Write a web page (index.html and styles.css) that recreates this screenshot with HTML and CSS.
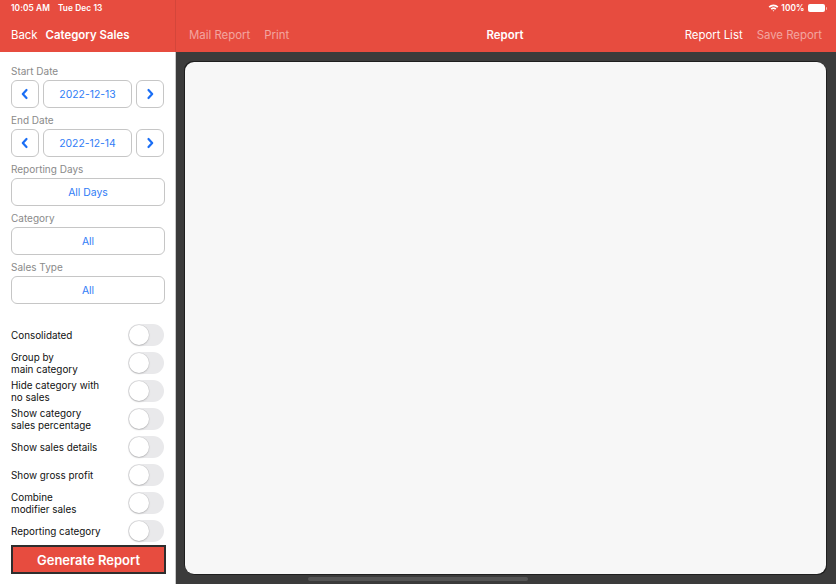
FILE: index.html
```html
<!DOCTYPE html>
<html>
<head>
<meta charset="utf-8">
<link rel="stylesheet" href="styles.css">
</head>
<body>
<div class="app">
  <aside class="sidebar">
    <header class="bar side-bar">
      <div class="status"><span>10:05 AM</span><span class="date">Tue Dec 13</span></div>
      <nav class="nav">
        <span class="nav-item">Back</span>
        <span class="nav-item bold">Category Sales</span>
      </nav>
    </header>
    <div class="side-body">
      <div class="field">
        <div class="label">Start Date</div>
        <div class="date-row">
          <button class="btn chev"><svg width="10" height="12" viewBox="0 0 10 12"><path d="M6.5 2 L2.8 6 L6.5 10" fill="none" stroke="#1a6ef5" stroke-width="2.2" stroke-linecap="round" stroke-linejoin="round"/></svg></button>
          <button class="btn value">2022-12-13</button>
          <button class="btn chev"><svg width="10" height="12" viewBox="0 0 10 12"><path d="M3.5 2 L7.2 6 L3.5 10" fill="none" stroke="#1a6ef5" stroke-width="2.2" stroke-linecap="round" stroke-linejoin="round"/></svg></button>
        </div>
      </div>
      <div class="field">
        <div class="label">End Date</div>
        <div class="date-row">
          <button class="btn chev"><svg width="10" height="12" viewBox="0 0 10 12"><path d="M6.5 2 L2.8 6 L6.5 10" fill="none" stroke="#1a6ef5" stroke-width="2.2" stroke-linecap="round" stroke-linejoin="round"/></svg></button>
          <button class="btn value">2022-12-14</button>
          <button class="btn chev"><svg width="10" height="12" viewBox="0 0 10 12"><path d="M3.5 2 L7.2 6 L3.5 10" fill="none" stroke="#1a6ef5" stroke-width="2.2" stroke-linecap="round" stroke-linejoin="round"/></svg></button>
        </div>
      </div>
      <div class="field">
        <div class="label">Reporting Days</div>
        <button class="btn full">All Days</button>
      </div>
      <div class="field">
        <div class="label">Category</div>
        <button class="btn full">All</button>
      </div>
      <div class="field">
        <div class="label">Sales Type</div>
        <button class="btn full">All</button>
      </div>

      <div class="toggles">
        <div class="toggle-row"><span>Consolidated</span><span class="switch"></span></div>
        <div class="toggle-row"><span>Group by<br>main category</span><span class="switch"></span></div>
        <div class="toggle-row"><span>Hide category with<br>no sales</span><span class="switch"></span></div>
        <div class="toggle-row"><span>Show category<br>sales percentage</span><span class="switch"></span></div>
        <div class="toggle-row"><span>Show sales details</span><span class="switch"></span></div>
        <div class="toggle-row"><span>Show gross profit</span><span class="switch"></span></div>
        <div class="toggle-row"><span>Combine<br>modifier sales</span><span class="switch"></span></div>
        <div class="toggle-row"><span>Reporting category</span><span class="switch"></span></div>
      </div>
      <button class="generate">Generate Report</button>
    </div>
  </aside>
  <main class="main">
    <header class="bar main-bar">
      <div class="status status-right">
        <svg width="11" height="8" viewBox="0 0 11 8"><path d="M0.6 2.6 A7 7 0 0 1 10.4 2.6 L9.2 3.8 A5.3 5.3 0 0 0 1.8 3.8 Z" fill="#fff"/><path d="M2.6 4.6 A4.3 4.3 0 0 1 8.4 4.6 L7.2 5.8 A2.6 2.6 0 0 0 3.8 5.8 Z" fill="#fff"/><path d="M4.6 6.6 A1.5 1.5 0 0 1 6.4 6.6 L5.5 7.6 Z" fill="#fff"/></svg>
        <span>100%</span>
        <span class="battery"><span class="battery-fill"></span></span>
        <span class="battery-tip"></span>
      </div>
      <nav class="nav main-nav">
        <div class="nav-left">
          <span class="nav-item faded">Mail Report</span>
          <span class="nav-item faded">Print</span>
        </div>
        <span class="nav-item bold title">Report</span>
        <div class="nav-right">
          <span class="nav-item">Report List</span>
          <span class="nav-item faded">Save Report</span>
        </div>
      </nav>
    </header>
    <div class="canvas">
      <div class="paper"></div>
      <div class="home-indicator"></div>
    </div>
  </main>
</div>
</body>
</html>
```
FILE: styles.css
```css
* { box-sizing: border-box; }
html, body {
  margin: 0;
  padding: 0;
  width: 836px;
  height: 584px;
  overflow: hidden;
  font-family: Inter, "Liberation Sans", sans-serif;
}
.app {
  display: flex;
  width: 836px;
  height: 584px;
}
.sidebar {
  width: 176px;
  display: flex;
  flex-direction: column;
  background: #fff;
  border-right: 1px solid #c8c8c8;
}
.bar {
  height: 52px;
  background: #e74c3f;
  color: #fff;
  position: relative;
}
.side-bar {
  border-right: 1px solid #d4463a;
  margin-right: -1px;
}
.status {
  height: 16px;
  display: flex;
  align-items: center;
  padding-left: 11px;
  font-size: 8.3px;
  font-weight: 600;
  letter-spacing: 0.1px;
}
.status .date { margin-left: 8px; }
.status-right {
  justify-content: flex-end;
  padding-right: 9px;
  gap: 2px;
}
.battery {
  width: 17px;
  height: 8px;
  border-radius: 2px;
  background: #fff;
  margin-left: 1px;
  display: inline-block;
}
.battery-tip {
  width: 1.5px;
  height: 3px;
  background: rgba(255,255,255,0.6);
  border-radius: 0 1px 1px 0;
  margin-left: -1px;
}
.nav {
  height: 36px;
  display: flex;
  align-items: center;
  padding-left: 11px;
  padding-top: 1px;
  font-size: 11.4px;
  gap: 8px;
}
.nav-item { white-space: nowrap; }
.bold { font-weight: 600; }
.faded { color: rgba(255,255,255,0.5); }
.main-nav {
  position: relative;
  justify-content: space-between;
  padding-left: 13px;
  padding-right: 14px;
}
.nav-left, .nav-right { display: flex; gap: 14px; }
.title {
  position: absolute;
  left: 329px;
  transform: translateX(-50%);
}
.side-body {
  flex: 1;
  padding: 13px 11px 0 11px;
  display: flex;
  flex-direction: column;
}
.label {
  font-size: 10px;
  color: #8a8a8a;
  height: 15px;
  line-height: 13px;
}
.btn {
  font-family: inherit;
  background: #fff;
  border: 1px solid #c6c6c6;
  border-radius: 6px;
  height: 28px;
  color: #2f7cf6;
  font-size: 10.4px;
  padding: 0;
  display: flex;
  align-items: center;
  justify-content: center;
}
.date-row {
  display: flex;
  gap: 4px;
  margin-bottom: 6px;
}
.chev { width: 28px; }
.value { flex: 1; }
.full { width: 154px; margin-bottom: 6px; }
.toggles {
  margin-top: 11px;
  display: flex;
  flex-direction: column;
}
.toggle-row {
  height: 28px;
  display: flex;
  align-items: center;
  justify-content: space-between;
  font-size: 9.9px;
  line-height: 12px;
  color: #111;
}
.switch {
  width: 36px;
  height: 22px;
  border-radius: 11px;
  background: #e9e9eb;
  position: relative;
}
.switch::after {
  content: "";
  position: absolute;
  left: 1px;
  top: 1px;
  width: 20px;
  height: 20px;
  border-radius: 50%;
  background: #fff;
  box-shadow: 0 0 0 0.5px rgba(0,0,0,0.1), 0 1px 2px rgba(0,0,0,0.15);
}
.generate {
  margin-top: 0;
  width: 155px;
  height: 29px;
  background: #e74c3f;
  border: 2px solid #2e2e2e;
  color: #fff;
  font-family: inherit;
  font-size: 13px;
  font-weight: 600;
  padding: 0;
}
.main {
  flex: 1;
  display: flex;
  flex-direction: column;
}
.canvas {
  flex: 1;
  background: #3b3b3b;
  padding: 10px 10px 10px 9px;
  position: relative;
  display: flex;
}
.paper {
  flex: 1;
  background: #f7f7f7;
  border-radius: 9px;
  box-shadow: -1px -1px 0 #1e1e1e, 1px 1px 0 #1e1e1e;
}
.home-indicator {
  position: absolute;
  left: 132px;
  bottom: 3px;
  width: 220px;
  height: 4px;
  border-radius: 2px;
  background: #555;
}
```
